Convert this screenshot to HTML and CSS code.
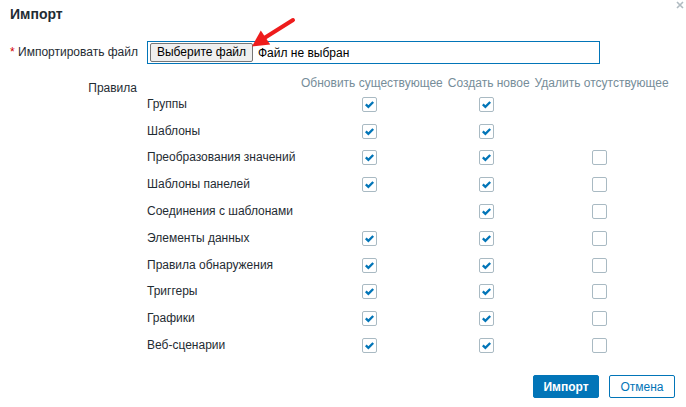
FILE: index.html
```html
<!DOCTYPE html>
<html lang="ru">
<head>
  <meta charset="UTF-8" />
  <title>Импорт</title>
  <link rel="stylesheet" href="styles.css">
</head>
<body>

  <div class="dialog">
    <h1 class="dialog-title">Импорт</h1>
    <button class="dialog-close" title="Закрыть">
      <svg width="8" height="8" viewBox="0 0 8 8"><path d="M1 1L7 7M7 1L1 7" stroke="#b0bbc1" stroke-width="1.6"/></svg>
    </button>

    <div class="form">
      <label class="form-label"><span class="required">*</span> Импортировать файл</label>
      <div class="file-field">
        <span class="file-button">Выберите файл</span>
        <span class="file-name">Файл не выбран</span>
      </div>

      <div class="form-label rules-label">Правила</div>
      <div class="rules">
        <div></div>
        <div class="rules-head">Обновить существующее</div>
        <div class="rules-head">Создать новое</div>
        <div class="rules-head">Удалить отсутствующее</div>
      </div>
    </div>

    <div class="dialog-footer">
      <button class="btn btn-primary">Импорт</button>
      <button class="btn btn-alt">Отмена</button>
    </div>

    <svg class="pointer" width="686" height="407" viewBox="0 0 686 407">
      <line x1="293" y1="20" x2="262" y2="39.5" stroke="#ee1c1c" stroke-width="4" stroke-linecap="round"/>
      <polygon points="252,46.5 260.8,30.4 270.2,44.6" fill="#ee1c1c"/>
    </svg>
  </div>

  <script>
    // 0 = no checkbox, 1 = checked, 2 = unchecked
    const rules = [
      ["Группы",                   1, 1, 0],
      ["Шаблоны",                  1, 1, 0],
      ["Преобразования значений",  1, 1, 2],
      ["Шаблоны панелей",          1, 1, 2],
      ["Соединения с шаблонами",   0, 1, 2],
      ["Элементы данных",          1, 1, 2],
      ["Правила обнаружения",      1, 1, 2],
      ["Триггеры",                 1, 1, 2],
      ["Графики",                  1, 1, 2],
      ["Веб-сценарии",             1, 1, 2],
    ];

    const check = '<svg width="15" height="15" viewBox="0 0 15 15"><polyline points="3.8,7.4 6.4,9.9 11.2,5" fill="none" stroke="#0275b8" stroke-width="2.3"/></svg>';
    const table = document.querySelector(".rules");

    rules.forEach(row => {
      const name = document.createElement("div");
      name.className = "rules-name";
      name.textContent = row[0];
      table.appendChild(name);

      for (let i = 1; i < 4; i++) {
        const cell = document.createElement("div");
        cell.className = "rules-cell";
        if (row[i]) {
          const box = document.createElement("span");
          box.className = "checkbox";
          if (row[i] === 1) box.innerHTML = check;
          cell.appendChild(box);
        }
        table.appendChild(cell);
      }
    });
  </script>

</body>
</html>
```

FILE: styles.css
```css
* {
  box-sizing: border-box;
}

body {
  margin: 0;
  font-family: "Liberation Sans", Arial, sans-serif;
  font-size: 12px;
  color: #1f2c33;
  background: #fff;
}

.dialog {
  position: relative;
  width: 686px;
  height: 407px;
  display: flex;
  flex-direction: column;
  padding: 6px 11px 9px 10px;
}

.dialog-title {
  margin: 0;
  font-size: 14px;
  line-height: 16px;
  font-weight: bold;
}

.dialog-close {
  position: absolute;
  top: 1px;
  right: 2px;
  width: 8px;
  height: 8px;
  padding: 0;
  border: none;
  background: none;
  display: flex;
}

.form {
  display: grid;
  grid-template-columns: 127px 1fr;
  column-gap: 10px;
  row-gap: 12px;
  margin-top: 19px;
}

.form-label {
  text-align: right;
  align-self: center;
  line-height: 15px;
  white-space: nowrap;
}

.required {
  color: #d40000;
}

.rules-label {
  align-self: start;
  padding-top: 5px;
}

.file-field {
  width: 453px;
  height: 23px;
  border: 1px solid #0275b8;
  display: flex;
  align-items: center;
  padding-left: 2px;
  color: #000;
}

.file-button {
  width: 103px;
  height: 19px;
  line-height: 17px;
  text-align: center;
  background: #efefef;
  border: 1px solid #767676;
  border-radius: 2px;
}

.file-name {
  margin-left: 5px;
}

.rules {
  display: grid;
  grid-template-columns: 149px auto auto auto;
  grid-template-rows: 15px;
  grid-auto-rows: 26.8px;
  column-gap: 5px;
  justify-content: start;
  align-items: center;
}

.rules-head {
  color: #768d99;
  line-height: 15px;
  white-space: nowrap;
}

.rules-name {
  line-height: 15px;
  white-space: nowrap;
}

.rules-cell {
  display: flex;
  justify-content: center;
  padding-right: 5px;
}

.checkbox {
  width: 15px;
  height: 15px;
  border: 1px solid #a9bac3;
  border-radius: 2px;
  display: flex;
  align-items: center;
  justify-content: center;
}

.checkbox svg {
  flex: none;
}

.dialog-footer {
  margin-top: auto;
  display: flex;
  justify-content: flex-end;
  gap: 10px;
}

.btn {
  width: 66px;
  height: 23px;
  padding: 0;
  font-family: inherit;
  font-size: 12px;
  border-radius: 2px;
  border: 1px solid #0275b8;
}

.btn-primary {
  background: #0275b8;
  color: #fff;
  font-weight: bold;
}

.btn-alt {
  background: #fff;
  color: #0275b8;
}

.pointer {
  position: absolute;
  top: 0;
  left: 0;
  pointer-events: none;
}
```
